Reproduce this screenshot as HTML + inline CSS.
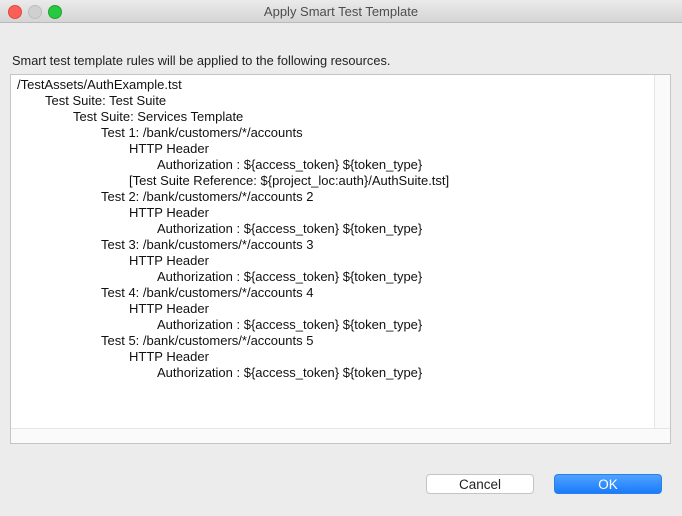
<!DOCTYPE html>
<html><head><style>
body{margin:0;width:682px;height:516px;background:#ececec;font-family:"Liberation Sans",sans-serif;position:relative;overflow:hidden}
.tb{position:absolute;left:0;top:0;width:682px;height:22px;background:linear-gradient(#ebebeb,#d5d5d5);border-bottom:1px solid #b9b9b9;text-align:center;font-size:13px;line-height:23px;color:#4d4d4d}
.d{position:absolute;top:5px;width:12px;height:12px;border-radius:50%}
.lbl{position:absolute;left:12px;top:53px;font-size:12.8px;color:#222}
.box{position:absolute;left:10px;top:74px;width:661px;height:370px;background:#fff;border:1px solid #c5c5c5;box-sizing:border-box}
.sv{position:absolute;right:0;top:0;width:15px;height:100%;background:#fafafa;border-left:1px solid #e5e5e5}
.sh{position:absolute;left:0;bottom:0;width:100%;height:14px;background:#fafafa;border-top:1px solid #e5e5e5}
.l{position:absolute;font-size:13px;color:#111;white-space:nowrap;line-height:16px}
.btn{position:absolute;top:474px;width:108px;height:20px;border-radius:4px;font-size:13.5px;text-align:center;line-height:20px;box-sizing:border-box}
</style></head><body>
<div class="tb">Apply Smart Test Template</div>
<div class="d" style="left:8px;background:#fc5f57;border:0.5px solid #de4a42"></div>
<div class="d" style="left:28px;background:#d0d0d0;border:0.5px solid #bdbdbd"></div>
<div class="d" style="left:48px;background:#28c840;border:0.5px solid #1fa52f"></div>
<div class="lbl">Smart test template rules will be applied to the following resources.</div>
<div class="box"><div class="sv"></div><div class="sh"></div>
<div class="l" style="left:6px;top:2px">/TestAssets/AuthExample.tst</div>
<div class="l" style="left:34px;top:18px">Test Suite: Test Suite</div>
<div class="l" style="left:62px;top:34px">Test Suite: Services Template</div>
<div class="l" style="left:90px;top:50px">Test 1: /bank/customers/*/accounts</div>
<div class="l" style="left:118px;top:66px">HTTP Header</div>
<div class="l" style="left:146px;top:82px">Authorization : ${access_token} ${token_type}</div>
<div class="l" style="left:118px;top:98px">[Test Suite Reference: ${project_loc:auth}/AuthSuite.tst]</div>
<div class="l" style="left:90px;top:114px">Test 2: /bank/customers/*/accounts 2</div>
<div class="l" style="left:118px;top:130px">HTTP Header</div>
<div class="l" style="left:146px;top:146px">Authorization : ${access_token} ${token_type}</div>
<div class="l" style="left:90px;top:162px">Test 3: /bank/customers/*/accounts 3</div>
<div class="l" style="left:118px;top:178px">HTTP Header</div>
<div class="l" style="left:146px;top:194px">Authorization : ${access_token} ${token_type}</div>
<div class="l" style="left:90px;top:210px">Test 4: /bank/customers/*/accounts 4</div>
<div class="l" style="left:118px;top:226px">HTTP Header</div>
<div class="l" style="left:146px;top:242px">Authorization : ${access_token} ${token_type}</div>
<div class="l" style="left:90px;top:258px">Test 5: /bank/customers/*/accounts 5</div>
<div class="l" style="left:118px;top:274px">HTTP Header</div>
<div class="l" style="left:146px;top:290px">Authorization : ${access_token} ${token_type}</div>
</div>
<div class="btn" style="left:426px;background:#fff;border:1px solid #c4c4c4;color:#222">Cancel</div>
<div class="btn" style="left:554px;background:linear-gradient(#4fa3ff,#1a7bfa);color:#fff;border:1px solid #2a7ff0">OK</div>
</body></html>
